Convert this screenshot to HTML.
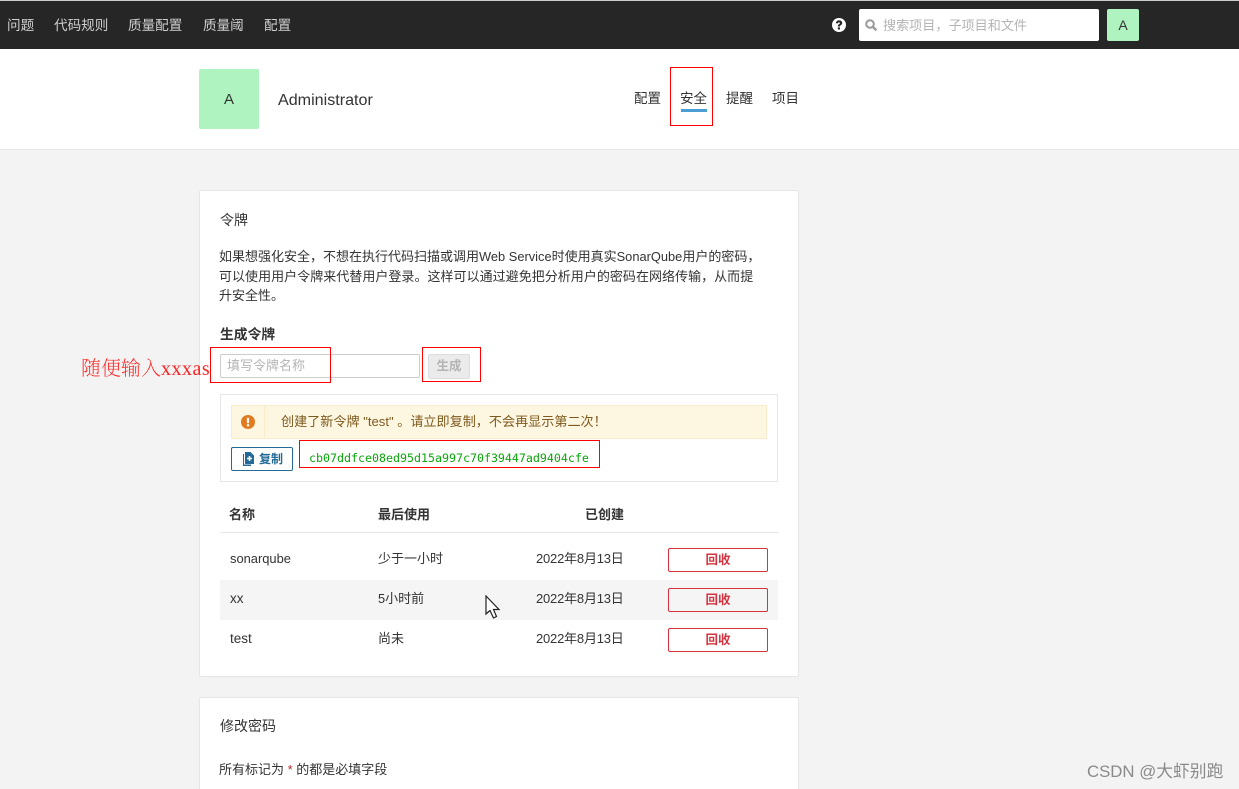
<!DOCTYPE html>
<html><head><meta charset="utf-8">
<style>
html,body{margin:0;padding:0;width:1239px;height:789px;overflow:hidden;background:#f3f3f3}
body{position:relative;font-family:"Liberation Sans","Noto Sans CJK SC",sans-serif;font-size:13px;color:#333}
.a{position:absolute;white-space:nowrap;box-sizing:border-box}
.t{position:absolute;white-space:nowrap;line-height:20px}
.red{position:absolute;box-sizing:border-box;border:1px solid #f00}
.nav{color:#cfcfcf;top:16px;font-size:13.6px}
.btn{position:absolute;left:668px;width:100px;height:24px;box-sizing:border-box;border:1px solid #d4333f;border-radius:2px;color:#d4333f;font-weight:bold;font-size:12.5px;line-height:22px;text-align:center}
.l{font-size:12.85px}
.d{letter-spacing:-.2px}
</style></head><body>
<div class="a" style="left:0;top:0;width:1239px;height:1px;background:#ccc"></div>
<div class="a" style="left:0;top:1px;width:1239px;height:48px;background:#262626"></div>
<span class="t nav" style="left:7px">问题</span>
<span class="t nav" style="left:54px">代码规则</span>
<span class="t nav" style="left:128px">质量配置</span>
<span class="t nav" style="left:203px">质量阈</span>
<span class="t nav" style="left:264px">配置</span>
<svg class="a" style="left:832px;top:18px" width="14" height="14" viewBox="0 0 14 14"><circle cx="7" cy="7" r="7" fill="#fff"/><path d="M3.900 5.200C4.100 3.400 5.400 2.400 7.100 2.400c1.800 0 3.100 1 3.100 2.600 0 1.200-.7 1.800-1.400 2.200-.6.400-.8.600-.8 1.300H5.800c0-1.200.4-1.800 1.200-2.300.6-.4.9-.6.900-1.100 0-.4-.4-.7-.9-.7-.6 0-1 .4-1.100 1z" fill="#262626"/><rect x="5.800" y="9.400" width="2.200" height="2.100" fill="#262626"/></svg>
<div class="a" style="left:859px;top:9px;width:240px;height:32px;background:#fff;border-radius:2px"></div>
<svg class="a" style="left:865px;top:19px" width="12" height="12" viewBox="0 0 12 12"><circle cx="5" cy="5" r="3.800" fill="none" stroke="#999" stroke-width="2"/><path d="M7.700 7.700L11.300 11.300" stroke="#999" stroke-width="2.400"/></svg>
<span class="t" style="left:883px;top:16px;color:#b4b4b4;font-size:13.1px">搜索项目，子项目和文件</span>
<div class="a" style="left:1107px;top:9px;width:32px;height:32px;background:#aef3c0;border-radius:2px;text-align:center;line-height:32px;font-size:14px;color:#333">A</div>

<div class="a" style="left:0;top:49px;width:1239px;height:101px;background:#fff;border-bottom:1px solid #e6e6e6"></div>
<div class="a" style="left:199px;top:69px;width:60px;height:60px;background:#aef3c0;border-radius:2px;text-align:center;line-height:62px;font-size:15px;color:#333">A</div>
<span class="t" style="left:278px;top:90px;font-size:16.100px">Administrator</span>
<span class="t" style="left:634px;top:89px;font-size:13.500px">配置</span>
<span class="t" style="left:680px;top:89px;font-size:13.500px">安全</span>
<div class="a" style="left:681px;top:109px;width:26px;height:3px;background:#4b9fd5"></div>
<span class="t" style="left:726px;top:89px;font-size:13.500px">提醒</span>
<span class="t" style="left:772px;top:89px;font-size:13.500px">项目</span>
<div class="red" style="left:670px;top:67px;width:43px;height:59px"></div>

<div class="a" style="left:199px;top:190px;width:600px;height:487px;background:#fff;border:1px solid #e6e6e6;border-radius:2px"></div>
<span class="t" style="left:220px;top:210px;font-size:14px">令牌</span>
<span class="t" style="left:219px;top:247px">如果想强化安全，不想在执行代码扫描或调用<span class="l">Web Service</span>时使用真实<span class="l">SonarQube</span>用户的密码，</span>
<span class="t" style="left:219px;top:267px;letter-spacing:.03px">可以使用用户令牌来代替用户登录。这样可以通过避免把分析用户的密码在网络传输，从而提</span>
<span class="t" style="left:219px;top:286px">升安全性。</span>
<span class="t" style="left:220px;top:325px;font-weight:bold;font-size:13.800px">生成令牌</span>
<div class="a" style="left:220px;top:354px;width:200px;height:24px;background:#fff;border:1px solid #cdcdcd;border-radius:2px"></div>
<span class="t" style="left:227px;top:356px;color:#b4b4b4">填写令牌名称</span>
<div class="a" style="left:428px;top:354px;width:42px;height:25px;background:#ebebeb;border:1px solid #ddd;border-radius:2px;text-align:center;line-height:23px;font-size:12.500px;font-weight:bold;color:#b4b4b4">生成</div>
<div class="red" style="left:210px;top:347px;width:121px;height:36px"></div>
<div class="red" style="left:422px;top:347px;width:59px;height:35px"></div>
<span class="t" style="left:81px;top:358px;font-family:'Liberation Serif','Noto Serif CJK SC',serif;font-size:20px;font-weight:200;line-height:22px;color:#f22"><span>随便输入</span><span style="letter-spacing:.5px">xxxas</span></span>

<div class="a" style="left:220px;top:394px;width:558px;height:88px;border:1px solid #e6e6e6"></div>
<div class="a" style="left:231px;top:405px;width:536px;height:34px;background:#fdf6e0;border:1px solid #faebcc"></div>
<div class="a" style="left:264px;top:405px;width:1px;height:34px;background:#faebcc"></div>
<svg class="a" style="left:241px;top:415px" width="14" height="14" viewBox="0 0 14 14"><circle cx="7" cy="7" r="7" fill="#e07b1f"/><rect x="5.900" y="2.800" width="2.200" height="5.400" fill="#fff"/><rect x="5.900" y="9.200" width="2.200" height="2.200" fill="#fff"/></svg>
<span class="t" style="left:281px;top:412px;color:#7d5a1e;font-size:13.100px">创建了新令牌 "test" 。请立即复制，不会再显示第二次！</span>
<div class="a" style="left:231px;top:447px;width:62px;height:24px;border:1px solid #236a97;border-radius:2px"></div>
<svg class="a" style="left:242px;top:452px" width="12" height="15" viewBox="0 0 12 15"><path d="M1 2H2V12.500H9V14H1z" fill="#236a97"/><path d="M3 0H8.500L12 3.500V12H3z" fill="#236a97"/><path d="M7.500 4V9M5 6.500H10" stroke="#fff" stroke-width="1.500"/></svg>
<span class="t" style="left:259px;top:449px;font-size:12px;font-weight:bold;color:#236a97">复制</span>
<div class="red" style="left:299px;top:440px;width:301px;height:28px"></div>
<span class="t" style="left:309px;top:448px;font-family:'DejaVu Sans Mono','Liberation Mono',monospace;font-size:11.670px;letter-spacing:-.02px;color:#0aa50a">cb07ddfce08ed95d15a997c70f39447ad9404cfe</span>

<span class="t" style="left:229px;top:505px;font-weight:bold">名称</span>
<span class="t" style="left:378px;top:505px;font-weight:bold">最后使用</span>
<span class="t" style="left:585px;top:505px;font-weight:bold">已创建</span>
<div class="a" style="left:220px;top:532px;width:558px;height:1px;background:#e6e6e6"></div>
<div class="a" style="left:220px;top:580px;width:558px;height:40px;background:#f5f5f5"></div>
<span class="t" style="left:230px;top:549px;font-size:12.900px">sonarqube</span><span class="t" style="left:378px;top:549px">少于一小时</span><span class="t d" style="left:536px;top:549px">2022年8月13日</span>
<span class="t" style="left:230px;top:589px;font-size:13.500px">xx</span><span class="t" style="left:378px;top:589px"><span class="l">5</span>小时前</span><span class="t d" style="left:536px;top:589px">2022年8月13日</span>
<span class="t" style="left:230px;top:629px;font-size:13.500px">test</span><span class="t" style="left:378px;top:629px">尚未</span><span class="t d" style="left:536px;top:629px">2022年8月13日</span>
<div class="btn" style="top:548px">回收</div>
<div class="btn" style="top:588px">回收</div>
<div class="btn" style="top:628px">回收</div>
<svg class="a" style="left:485px;top:595px" width="16" height="25" viewBox="0 0 16 25"><path d="M1 1V19L5 15.500L8.500 23L11.500 21.500L8.500 14.500H14z" fill="#fff" stroke="#222" stroke-width="1.200"/></svg>

<div class="a" style="left:199px;top:697px;width:600px;height:100px;background:#fff;border:1px solid #e6e6e6;border-radius:2px"></div>
<span class="t" style="left:220px;top:716px;font-size:14px">修改密码</span>
<span class="t" style="left:219px;top:760px">所有标记为 <span style="color:#b02a30">*</span> 的都是必填字段</span>
<span class="t" style="left:1087px;top:762px;font-size:16.800px;color:#8a8a8a">CSDN @大虾别跑</span>
</body></html>
